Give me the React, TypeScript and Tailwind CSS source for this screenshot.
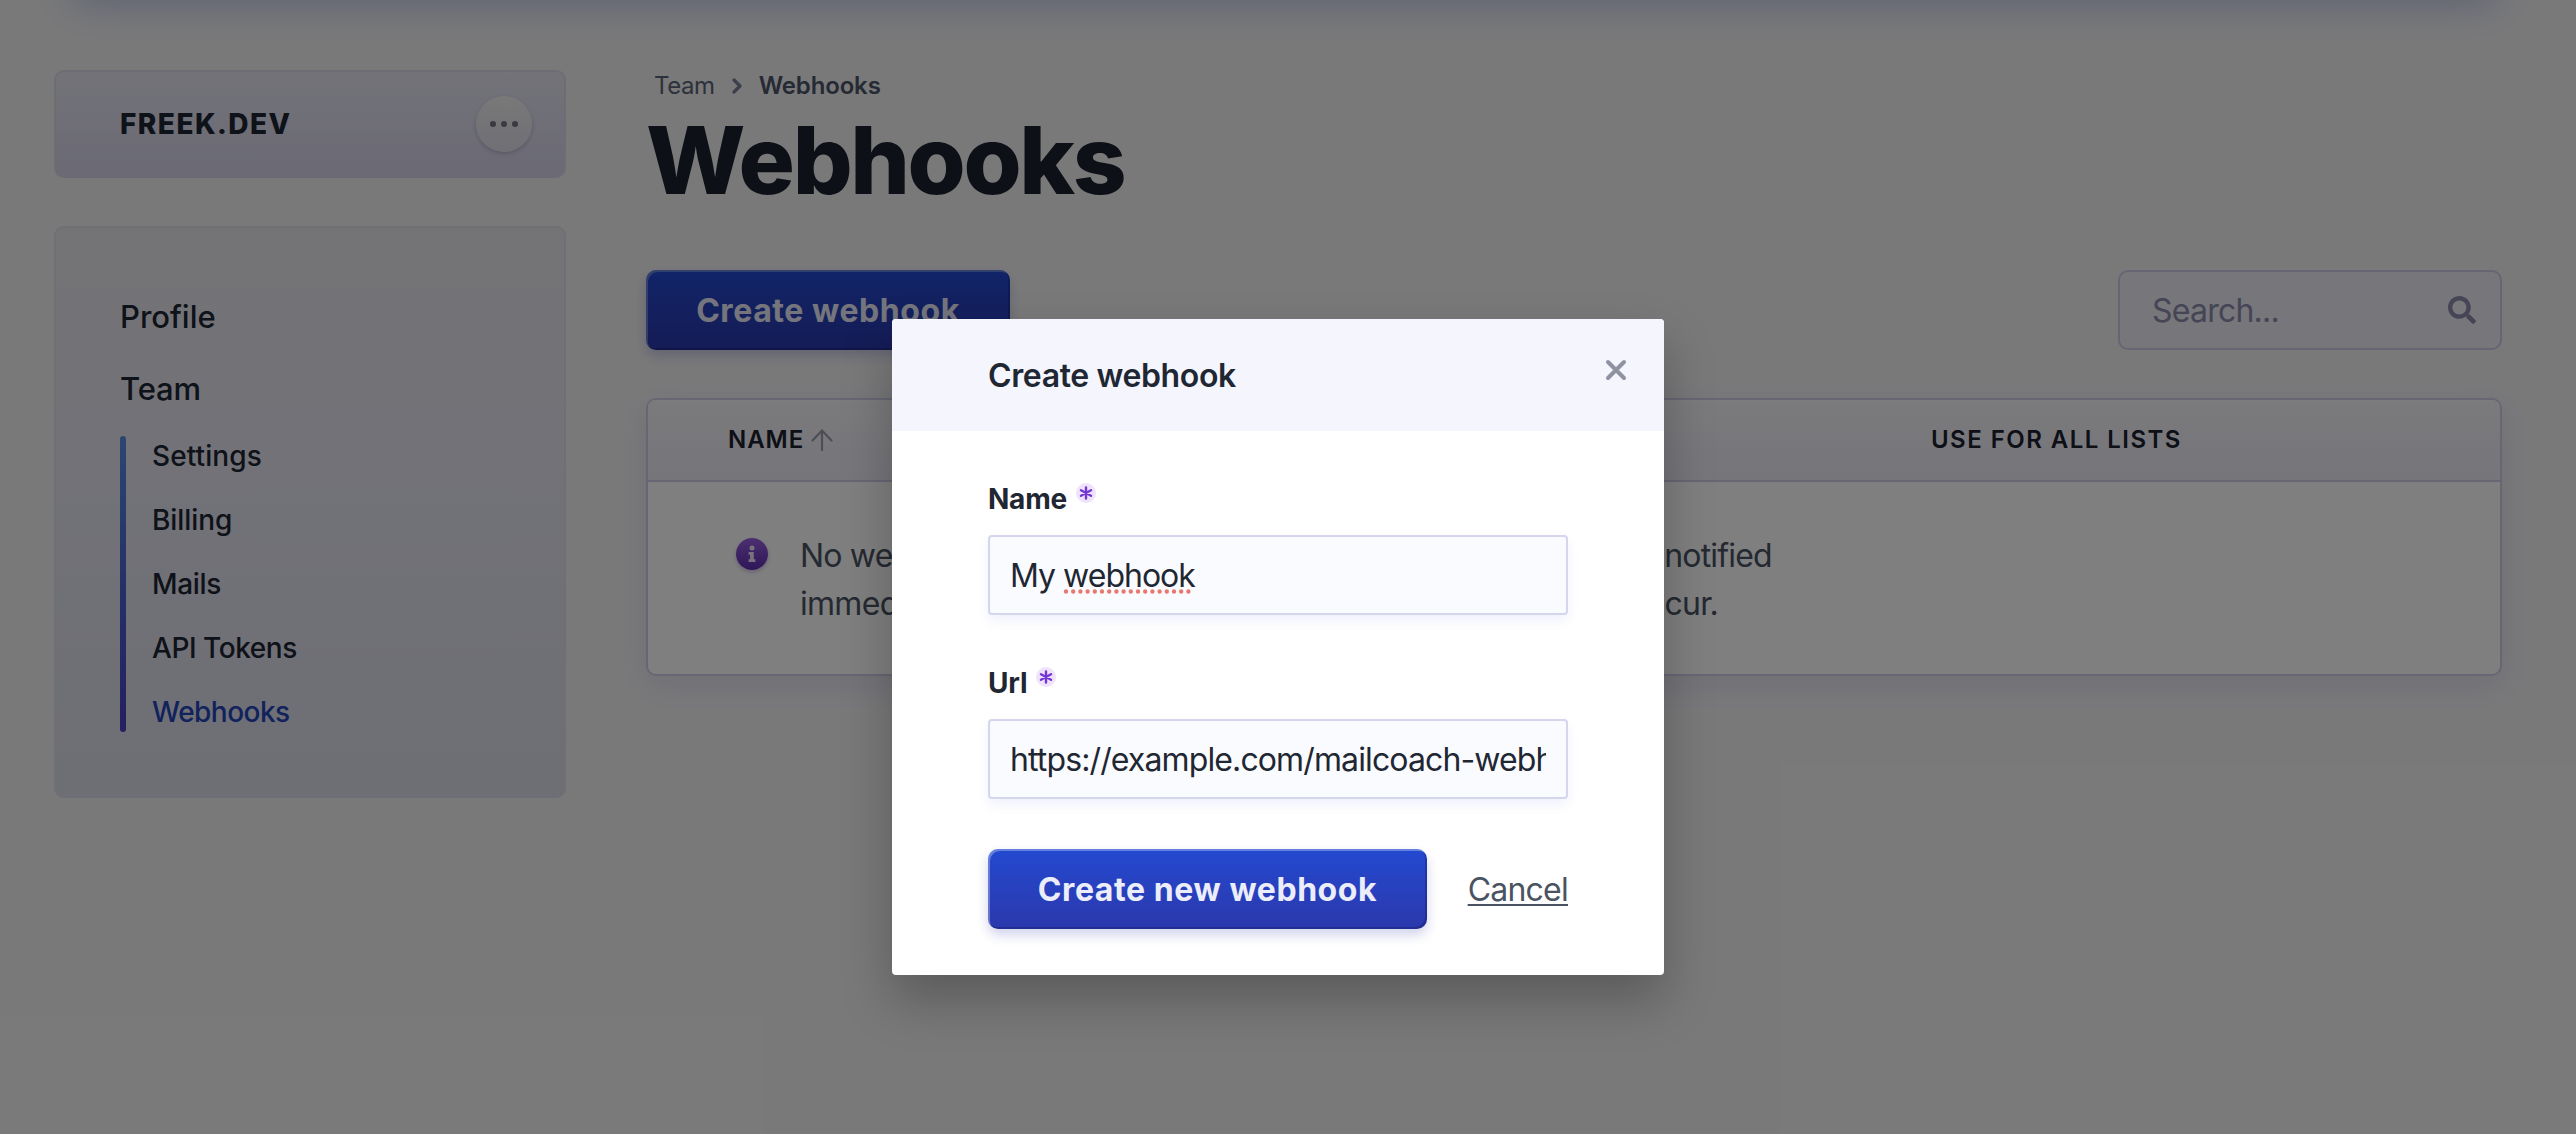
import React from "react";
import { FaSearch } from "react-icons/fa";

const teamLinks = [
  { label: "Settings", style: "tracking-[0.003em] text-[#1c2433]" },
  { label: "Billing", style: "tracking-[-0.002em] text-[#1c2433]" },
  { label: "Mails", style: "tracking-[-0.012em] text-[#1c2433]" },
  { label: "API Tokens", style: "tracking-[-0.016em] text-[#1c2433]" },
  { label: "Webhooks", style: "tracking-[-0.019em] text-[#2444b8]" },
];

function Sidebar() {
  return (
    <aside className="flex w-[512px] shrink-0 flex-col gap-12">
      <div className="flex h-[108px] items-center justify-between rounded-[10px] border-2 border-b-0 border-[#dadae6] bg-gradient-to-b from-[#e6e6f2] to-[#d6d4ea] pr-8 pl-16">
        <span className="mb-[3px] text-[28px] font-extrabold tracking-[0.052em] text-[#1c2433]">FREEK.DEV</span>
        <button className="mb-[2px] flex size-14 items-center justify-center gap-[5px] rounded-full bg-gradient-to-b from-[#f2f2f2] to-[#dfdfeb] shadow-[0_2px_4px_rgba(60,55,110,0.25)]">
          <i className="size-1.5 rounded-full bg-[#727584]" />
          <i className="size-1.5 rounded-full bg-[#727584]" />
          <i className="size-1.5 rounded-full bg-[#727584]" />
        </button>
      </div>
      <nav className="h-[572px] rounded-[10px] border-2 border-b-0 border-[#dedee8] bg-gradient-to-b from-[#e9e9ee] via-[#e3e3f0] to-[#dcdcea] pt-[64px] pl-16 text-[#1c2433]">
        <a className="block h-[72px] text-[31px] leading-[50px] font-medium">Profile</a>
        <a className="block h-[72px] text-[31px] leading-[50px] font-medium tracking-[-0.005em]">Team</a>
        <div className="flex h-[296px]">
          <div className="w-1.5 rounded-full bg-gradient-to-b from-[#568de4] via-[#4a62d0] to-[#4a3fc0]" />
          <ul className="-mt-[12px] ml-[26px]">
            {teamLinks.map((l) => (
              <li key={l.label} className={"h-16 text-[28px] leading-16 font-medium " + l.style}>
                {l.label}
              </li>
            ))}
          </ul>
        </div>
      </nav>
    </aside>
  );
}

function PrimaryButton({ children, className }: { children: React.ReactNode; className: string }) {
  return (
    <button
      className={
        "h-20 rounded-[10px] bg-gradient-to-b from-[#2249d0] to-[#2b38ac] pt-[2px] text-[32px] font-bold tracking-[0.018em] text-[#ebedfb] shadow-[inset_2px_2px_0_rgba(255,255,255,0.3),inset_-2px_-2px_0_rgba(0,0,40,0.2),0_6px_12px_rgba(40,55,170,0.22)] " +
        className
      }
    >
      {children}
    </button>
  );
}

function Page() {
  return (
    <div className="flex h-[1134px] gap-20 bg-[#f3f3f5] pt-[70px] pr-[74px] pl-[54px]">
      <Sidebar />
      <main className="min-w-0 flex-1">
        <div className="flex h-8 items-center pl-2 text-[24px] text-[#596275]">
          <span className="tracking-[-0.018em]">Team</span>
          <svg viewBox="0 0 12 18" className="mr-4 ml-4 h-[18px] w-3" fill="none" stroke="#7a8194" strokeWidth="3.4" strokeLinecap="round" strokeLinejoin="round">
            <path d="M3 3l6 6-6 6" />
          </svg>
          <span className="font-semibold tracking-[-0.006em] text-[#4c5468]">Webhooks</span>
        </div>
        <h1 className="mt-[10px] h-[96px] text-[94px] leading-[96px] font-extrabold tracking-[-0.025em] text-[#1a202c]">Webhooks</h1>
        <div className="mt-[62px] flex justify-between">
          <PrimaryButton className="w-[364px]">Create webhook</PrimaryButton>
          <div className="flex h-20 w-[384px] items-center justify-between rounded-[10px] border-2 border-[#cbcbe6] bg-[#ededf6] pr-[24px] pl-8 text-[#8b8aab]">
            <span className="mt-px text-[32px] tracking-[-0.024em]">Search...</span>
            <FaSearch size={28} />
          </div>
        </div>
        <div className="mt-12 h-[278px] overflow-hidden rounded-[10px] border-2 border-[#cfcfe8] bg-white shadow-[0_10px_30px_rgba(90,85,190,0.12)]">
          <div className="grid h-[82px] grid-cols-[1203px_1fr] items-center border-b-2 border-[#cfcfe8] bg-gradient-to-b from-[#f6f6fb] to-[#ebebf5] pl-20 text-[24px] font-semibold text-[#1a202c]">
            <span className="flex items-center tracking-[0.04em]">
              NAME
              <svg viewBox="0 0 22 22" className="ml-[7px] size-[22px]" fill="none" stroke="#9b9da9" strokeWidth="2.2" strokeLinecap="round">
                <path d="M11 21V2M1.5 11.5L11 1.5l9.5 10" />
              </svg>
            </span>
            <span className="tracking-[0.061em]">USE FOR ALL LISTS</span>
          </div>
          <div className="flex gap-8 pt-[50px] pl-[88px]">
            <span className="mt-[6px] flex size-8 items-center justify-center rounded-full bg-gradient-to-b from-[#9a5ee0] to-[#5f2cb0] shadow-[0_2px_4px_rgba(90,50,170,0.3)]">
              <svg viewBox="0 0 12 18" className="h-[18px] w-3" fill="#ece6fa">
                <circle cx="6" cy="3" r="2.5" />
                <path d="M2.6 7h5.2v7.2h1.6V17H2.6v-2.8h1.5V9.7H2.6z" />
              </svg>
            </span>
            <p className="text-[32px] leading-[48px] whitespace-nowrap text-[#4a5263]">
              <span className="tracking-[-0.0255em]">No webhooks configured yet. You can use webhooks to get notified</span>
              <br />
              <span className="tracking-[-0.022em]">immediately when certain events (such as subscriptions) occur.</span>
            </p>
          </div>
        </div>
      </main>
    </div>
  );
}

function FieldLabel({ children }: { children: React.ReactNode }) {
  return (
    <div className="flex h-[34px] items-center text-[28px] font-bold tracking-[-0.008em]">
      {children}
      <span className="mb-[13px] ml-[9px] flex size-5 items-center justify-center rounded-full bg-[#efe3fb]">
        <svg viewBox="0 0 14 14" className="size-[14px]" stroke="#7436d4" strokeWidth="2.4" strokeLinecap="round">
          <path d="M7 1.4v11.2M2 4.2l10 5.6M2 9.8l10-5.6" />
        </svg>
      </span>
    </div>
  );
}

function Field({ children }: { children: React.ReactNode }) {
  return (
    <div className="h-20 rounded-[4px] border-2 border-[#d5d5ee] bg-[#fafbff] px-[20px] text-[32px] leading-[78px] shadow-[0_6px_12px_rgba(90,110,220,0.09)]">
      <div className="h-[76px] overflow-hidden whitespace-nowrap">{children}</div>
    </div>
  );
}

function Modal() {
  return (
    <div className="absolute top-[319px] left-[892px] h-[656px] w-[772px] rounded-[4px] bg-white text-[#1f2733] shadow-[0_25px_50px_rgba(0,0,0,0.25)]">
      <header className="flex h-[112px] items-center justify-between rounded-t-[4px] bg-[#f5f5fe] pr-[37px] pl-24">
        <h2 className="mt-[2px] text-[32px] font-semibold tracking-[-0.012em]">Create webhook</h2>
        <svg viewBox="0 0 22 22" className="mb-[11px] size-[22px]" fill="none" stroke="#8f92a0" strokeWidth="4" strokeLinecap="round">
          <path d="M3 3l16 16M19 3L3 19" />
        </svg>
      </header>
      <div className="px-24 pt-[51px]">
        <FieldLabel>Name</FieldLabel>
        <div className="mt-[19px]">
          <Field>
            <span className="tracking-[-0.031em]">
              My{" "}
              <span className="relative inline-block">
                webhook
                <svg className="absolute top-[52px] left-0 h-[5px] w-[131px]" viewBox="0 0 131 5" fill="none">
                  <path d="M3 2.5H130" stroke="#e8796f" strokeWidth="4.4" strokeLinecap="round" strokeDasharray="0 7.2" />
                </svg>
              </span>
            </span>
          </Field>
        </div>
        <div className="mt-[51px]">
          <FieldLabel>Url</FieldLabel>
        </div>
        <div className="mt-[19px]">
          <Field>
            <span className="tracking-[-0.0275em]">https://example.com/mailcoach-webhooks</span>
          </Field>
        </div>
        <div className="mt-[50px] flex items-center justify-between">
          <PrimaryButton className="w-[439px]">Create new webhook</PrimaryButton>
          <a className="mt-[2px] text-[32px] tracking-[-0.024em] text-[#4a5362] underline decoration-2 underline-offset-[3px]">Cancel</a>
        </div>
      </div>
    </div>
  );
}

export default function App() {
  return (
    <div className="relative h-[1134px] w-[2576px] overflow-hidden font-['Inter',sans-serif]">
      <Page />
      <div className="absolute -top-10 left-[74px] h-10 w-[2420px] shadow-[0_0_40px_rgba(50,75,190,0.34)]" />
      <div className="absolute inset-0 bg-black/50" />
      <Modal />
    </div>
  );
}
